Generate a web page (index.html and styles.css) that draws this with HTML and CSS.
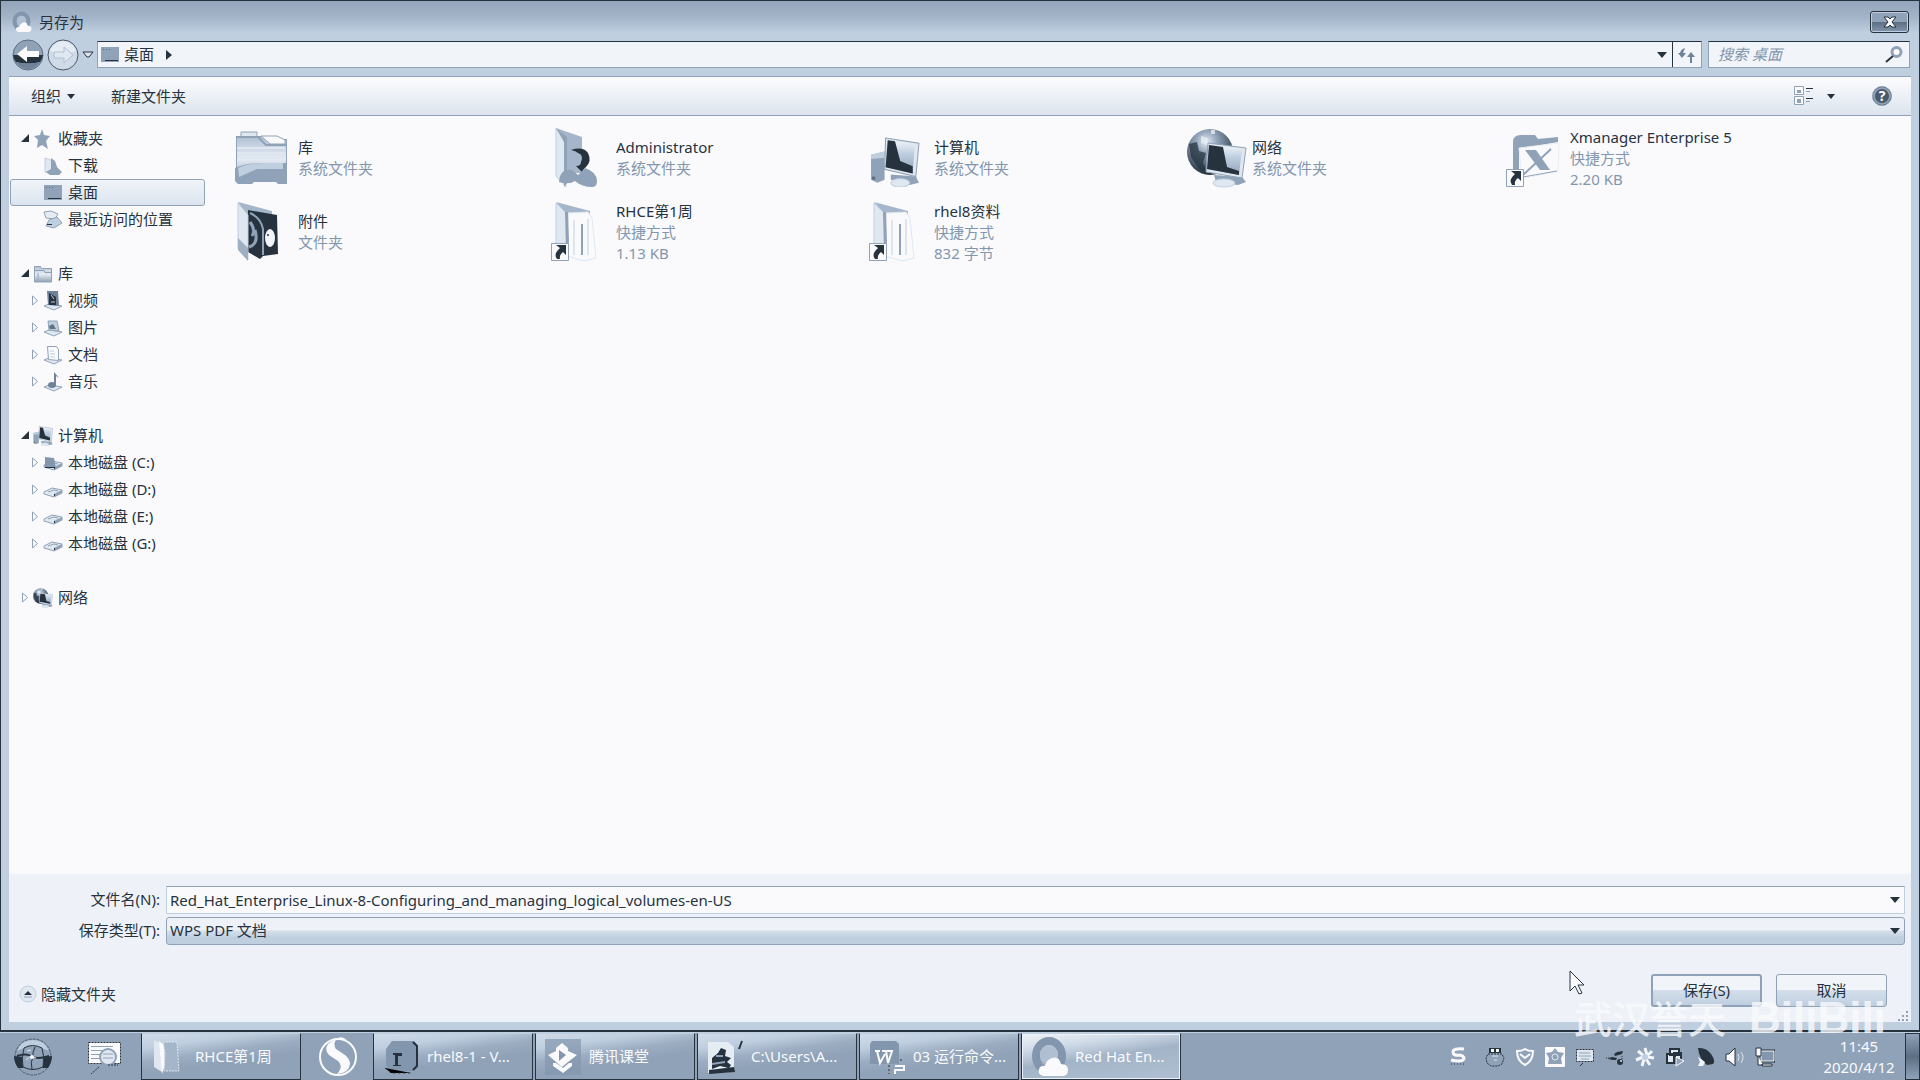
FILE: index.html
```html
<!DOCTYPE html>
<html lang="zh-CN">
<head>
<meta charset="utf-8">
<title>另存为</title>
<link rel="stylesheet" href="styles.css">
</head>
<body>
<svg class="defs" aria-hidden="true">
  <defs>
    <linearGradient id="g-fold" x1="0" y1="0" x2="1" y2="1"><stop offset="0" stop-color="#fafafd"/><stop offset="1" stop-color="#90a2b8"/></linearGradient>
    <linearGradient id="g-lib" x1="0" y1="0" x2="0" y2="1"><stop offset="0" stop-color="#b0c0d2"/><stop offset=".5" stop-color="#e6ecf4"/><stop offset="1" stop-color="#90a2b8"/></linearGradient>
    <radialGradient id="g-globe" cx=".42" cy=".28" r=".7"><stop offset="0" stop-color="#e6ecf4"/><stop offset=".35" stop-color="#90a2b8"/><stop offset="1" stop-color="#26333f"/></radialGradient>
    <linearGradient id="g-screen" x1="0" y1="0" x2="0" y2="1"><stop offset="0" stop-color="#f2f5fa"/><stop offset=".4" stop-color="#bfcfe0"/><stop offset="1" stop-color="#90a2b8"/></linearGradient>

    <symbol id="i-desk" viewBox="0 0 20 16"><path fill="#90a2b8" d="M1 0h18v15H1z"/><path stroke="#26333f" d="M5 13.500h13"/><path stroke="#5c6e82" stroke-dasharray="1 2" d="M3 2.500h9"/></symbol>
    <symbol id="i-star" viewBox="0 0 20 20"><path fill="#90a2b8" d="M9 0l2 6 6 1-4 5 2 8-6-4-5 3 1-8-4-4 6-1z"/></symbol>
    <symbol id="i-down" viewBox="0 0 20 20"><path fill="#dfe7f0" stroke="#bfcfe0" d="M2 2l8 3v13l-8-2z"/><path fill="#90a2b8" d="M8 2l4 3 2 6 5 5-3 3-9 0-4-3 5-3z"/></symbol>
    <symbol id="i-recent" viewBox="0 0 20 20"><path fill="#e6ecf4" stroke="#90a2b8" d="M1 2l7-1 7 3-3 5-9-1z"/><path fill="#bfcfe0" stroke="#90a2b8" d="M6 10l8-3 5 6-8 5-8-2z"/><path stroke="#26333f" d="M4 14.500h5"/></symbol>
    <symbol id="i-lib" viewBox="0 0 20 20"><path fill="url(#g-lib)" stroke="#90a2b8" d="M1.500 2.500h6l1 2h10V18h-17z"/><path stroke="#90a2b8" fill="none" d="M2 6.500h9l1 2h7M5 9v8"/></symbol>
    <symbol id="i-video" viewBox="0 0 20 20"><path fill="#dfe7f0" stroke="#90a2b8" d="M1 15l5-2 13 2-8 4z"/><path fill="#6f8299" d="M4 0h11l1 15-11-1z"/><path fill="#26333f" d="M6 2l7 4v8H6z"/><path stroke="#bfcfe0" d="M8 4l3 4M8 11h4"/></symbol>
    <symbol id="i-pic" viewBox="0 0 20 20"><path fill="#dfe7f0" stroke="#90a2b8" d="M1 14l5-2 13 2-8 4z"/><path fill="#bfcfe0" stroke="#90a2b8" d="M5 3h9l2 10-10-1z"/><path fill="#26333f" d="M6 8l4-2 3 5-6 0z" opacity=".6"/></symbol>
    <symbol id="i-doc" viewBox="0 0 20 20"><path fill="#dfe7f0" stroke="#90a2b8" d="M1 15l5-2 13 2-8 4z"/><path fill="#fafafd" stroke="#90a2b8" d="M4.500 1.500h9l2 3v11l-10-1z"/><path stroke="#bfcfe0" d="M7 6h4M7 9h5M7 12h5"/></symbol>
    <symbol id="i-music" viewBox="0 0 20 20"><path fill="#dfe7f0" stroke="#90a2b8" d="M1 15l5-2 13 2-8 4z"/><ellipse cx="9" cy="13" rx="4" ry="3" fill="#6f8299"/><path fill="#6f8299" d="M11 0l5 6-3-2v10h-2z"/></symbol>
    <symbol id="i-pc" viewBox="0 0 48 48"><path fill="#90a2b8" d="M1 17l13-3v27l-7 3-6-3z"/><path fill="#bfcfe0" d="M1 17l13-3v6L1 21z"/><path fill="#5c6e82" d="M2 38h3v3H2z"/><path fill="#90a2b8" d="M20 36l24 2 3 6-9 2-18-5z"/><ellipse cx="29" cy="44" rx="9" ry="4" fill="#dfe7f0" stroke="#bfcfe0"/><path fill="#dfe7f0" stroke="#90a2b8" d="M15 1l32 5-3 32-30-7z"/><path fill="url(#g-screen)" d="M17 3l26 4-2 28-26-6z"/><path fill="#26333f" d="M17 3l7 1 5 19 12 5v7l-26-6z"/></symbol>
    <symbol id="i-disk" viewBox="0 0 20 20"><path fill="#dfe7f0" stroke="#90a2b8" d="M1 12l8-4 10 2v3l-8 4-10-3z"/><path fill="#90a2b8" d="M11 14l8-4v3l-8 4z"/><path fill="none" stroke="#90a2b8" d="M5 12l6-2 4 1"/><path fill="#26333f" d="M11 14h1v2h-1z"/></symbol>
    <symbol id="i-diskc" viewBox="0 0 20 20"><use href="#i-disk"/><path fill="#8296ad" d="M2 4l9 1 2 10-11-1z"/><path stroke="#26333f" d="M2 14.500h10"/></symbol>
    <symbol id="i-net" viewBox="0 0 60 60"><circle cx="23" cy="24" r="23" fill="url(#g-globe)"/><path fill="#e6ecf4" opacity=".8" d="M14 8l7 2-1 7-6-2zM24 2h4v4h-4z"/><path fill="#26333f" d="M2 16l8-2 2 9 7 2-3 10 5 11-9-5-8-12z" opacity=".75"/><path fill="#90a2b8" d="M27 47l28 2 4 5-8 3-22-3z"/><ellipse cx="37" cy="55" rx="11" ry="4" fill="#dfe7f0" stroke="#bfcfe0"/><path fill="#dfe7f0" stroke="#90a2b8" d="M21 15l38 5-4 30-36-6z"/><path fill="url(#g-screen)" d="M22 17l33 4-3 26-32-6z"/><path fill="#26333f" d="M22 17l14 2 4 20 12 4v4l-32-6z"/></symbol>

    <symbol id="f-lib" viewBox="0 0 60 60"><path fill="#dfe7f0" stroke="#90a2b8" d="M8 4h16v6H8z"/><path fill="url(#g-lib)" stroke="#90a2b8" d="M3.500 8.500h27l4 3h19v42h-50z"/><path fill="#fafafd" stroke="#90a2b8" d="M28 8h16l8 4v4H37z"/><path fill="none" stroke="#90a2b8" stroke-width="2" d="M3 9h22l8 8h21"/><path stroke="#dfe7f0" stroke-width="2" d="M4 20h48M4 25h48M4 30h48"/><path fill="#90a2b8" d="M2 40q10-5 26-5h26v21h-9l-3-3H22l-3 3H5l-3-3z"/><path fill="#bfcfe0" d="M5 40q10-5 25-5h20v6H24l-18 8z"/></symbol>
    <symbol id="f-user" viewBox="0 0 60 60"><path fill="#a6b6ca" d="M5 0l26 9v36H14z"/><path fill="#dfe7f0" stroke="#bfcfe0" d="M5 0l10 13v46L5 48z"/><path fill="#90a2b8" d="M5 0l11 9v46l-3 4V14z"/><circle cx="27" cy="31" r="9" fill="#a6b6ca"/><path fill="#26333f" d="M20 22q12-4 17 3 4 8-2 14-4 3-3 6l-7-7q5 0 5-4 3-7-3-9-2-2-7-3z"/><path fill="#90a2b8" d="M8 54q1-14 13-12l6 5 7-7q12 4 12 13 0 6-5 6-10 0-17-6-6 4-16 1z"/></symbol>
    <symbol id="f-music" viewBox="0 0 60 60"><path fill="#a6b6ca" d="M5 0l34 9v8L8 11z"/><path fill="#26333f" d="M15 8l29 5 1 39-15 2-3 3-12-7z"/><path fill="none" stroke="#90a2b8" stroke-width="2" d="M17 11q11 5 13 16v26"/><ellipse cx="37" cy="36" rx="5" ry="9" fill="#f2f5fa"/><circle cx="35" cy="33" r="1" fill="#26333f"/><path fill="none" stroke="#90a2b8" stroke-width="3" d="M17 20q6 8 2 14M22 28q4 14-6 17"/><path fill="#dfe7f0" stroke="#bfcfe0" d="M5 1l10 12v45L5 47z"/><path fill="#90a2b8" d="M5 36l10 10v13L5 48z" opacity=".8"/></symbol>
    <symbol id="i-arrow" viewBox="0 0 18 18"><path fill="#fafafd" stroke="#90a2b8" d="M.5.5h17v17H.5z"/><path fill="#26333f" d="M5 2h10v10l-3-3q-4 3-3 7H6q-4-5 3-11z"/></symbol>
    <symbol id="f-short" viewBox="0 0 60 60"><path fill="#a6b6ca" d="M5 0l34 9v6L14 10z"/><path fill="#fafafd" stroke="#dfe7f0" d="M17 11l20-1 4 6 4 40-12 3-17-5z"/><path fill="none" stroke="#90a2b8" stroke-width="2" d="M31 22v31"/><path fill="none" stroke="#bfcfe0" d="M23 18v35M37 17v36"/><path fill="#dfe7f0" stroke="#bfcfe0" d="M5 1l11 11v46L5 48z"/><path fill="#90a2b8" d="M14 10h3l1 30-3 9z"/><use href="#i-arrow" x="0" y="41" width="18" height="18"/></symbol>
    <symbol id="f-xm" viewBox="0 0 60 60"><path fill="#90a2b8" d="M8 14q0-7 8-7h14l3 4 20-2v5l-39 7v24H8z"/><path fill="#fafafd" stroke="#e9eef5" d="M14 20l40-5-1 28-36 8z"/><path fill="#90a2b8" d="M20 22h11l14 20H35z"/><path stroke="#90a2b8" stroke-width="2" d="M46 21L18 47"/><path stroke="#90a2b8" d="M18 49l34-6"/><use href="#i-arrow" x="1" y="41" width="18" height="18"/></symbol>
    <symbol id="i-cloud" viewBox="0 0 38 40"><ellipse cx="18" cy="19" rx="13" ry="15" fill="none" stroke="#8296ad" stroke-width="8"/><circle cx="18" cy="17" r="9" fill="#b0c0d2"/><path fill="#fafafd" d="M12 39q-6-2-4-7 2-4 6-3 1-6 7-8 7-2 9 6 7 0 7 6 0 6-6 6z"/></symbol>
  </defs>
</svg>

<main class="dialog">
  <header class="titlebar">
    <svg class="app-icon"><use href="#i-cloud"/></svg>
    <h1 class="title">另存为</h1>
    <button class="close" aria-label="关闭"><svg width="14" height="12" viewBox="0 0 14 12"><path d="M1 1h4l2 2 2-2h4L9 6l4 5H9L7 9l-2 2H1l4-5z" fill="#fafafd" stroke="#26333f"/></svg></button>
  </header>

  <nav class="navbar">
    <div class="history">
      <button class="plain" aria-label="后退"><svg width="32" height="32" viewBox="0 0 32 32"><circle cx="16" cy="16" r="15" fill="#90a2b8" stroke="#5c6e82"/><path fill="#26333f" d="M1 16h30q-1 5-3 7-12 3-24 0-2-2-3-7z"/><path fill="#6f8299" d="M4 23q12 3 24 0-5 7-12 7T4 23z"/><path fill="#fafafd" d="M5 15l10-8v5h12v6H15v5z"/></svg></button>
      <button class="plain" aria-label="前进"><svg width="32" height="32" viewBox="0 0 32 32"><circle cx="16" cy="16" r="15" fill="#cfdbe8" stroke="#4a5a6b"/><path fill="#e6ecf4" d="M3 12q5-10 13-10t13 10q-12 5-26 0z"/><path fill="#dfe7f0" stroke="#b0c0d2" d="M7 13h10V8l9 8-9 8v-5H7z"/></svg></button>
      <button class="plain" aria-label="最近的页面"><svg width="12" height="8" viewBox="0 0 12 8"><path d="M1 1h10L7 6H5z" fill="#dfe7f0" stroke="#26333f"/></svg></button>
    </div>
    <div class="address">
      <svg width="20" height="16"><use href="#i-desk"/></svg>
      <a class="crumb" href="#">桌面</a>
      <svg width="6" height="10" viewBox="0 0 6 10"><path d="M0 0l6 5-6 5z" fill="#26333f"/></svg>
      <button class="plain address-drop" aria-label="以前的位置"><svg width="10" height="6"><path d="M0 0h10L5 6z" fill="#26333f"/></svg></button>
      <button class="refresh" aria-label="刷新"><svg width="18" height="18" viewBox="0 0 18 18"><path fill="#6f8299" d="M7 2L5 7h3l-4 5-4-5h2q1-4 5-5zM13 6l4 5h-3v6h-2v-6H9z"/></svg></button>
    </div>
    <label class="search">
      <input class="search-input" type="text" placeholder="搜索 桌面" aria-label="搜索 桌面">
      <svg width="18" height="18" viewBox="0 0 18 18"><circle cx="11.500" cy="6" r="4.500" fill="#fafafd" stroke="#90a2b8" stroke-width="3"/><path d="M8 10l-7 6" stroke="#26333f" stroke-width="2"/></svg>
    </label>
  </nav>

  <section class="client">
    <div class="toolbar">
      <button class="plain tool">组织 <svg width="8" height="5"><path d="M0 0h8L4 5z" fill="#26333f"/></svg></button>
      <button class="plain tool">新建文件夹</button>
      <div class="tool-right">
        <button class="plain view" aria-label="更改视图"><svg width="20" height="20" viewBox="0 0 20 20"><path fill="#fafafd" stroke="#90a2b8" d="M.5.5h9v8h-9zM.5 10.500h9v8h-9z"/><path fill="#90a2b8" d="M3 4h4v3H3zM3 13h4v4H3z"/><path stroke="#26333f" d="M12 2.500h7M12 12.500h7"/><path stroke="#90a2b8" d="M12 5.500h4M12 15.500h4"/></svg><svg width="8" height="5"><path d="M0 0h8L4 5z" fill="#26333f"/></svg></button>
        <button class="plain" aria-label="帮助"><svg width="20" height="20" viewBox="0 0 20 20"><circle cx="10" cy="10" r="9.500" fill="#26333f" stroke="#90a2b8"/><circle cx="10" cy="10" r="8" fill="#4a5a6b" stroke="#90a2b8" stroke-width="2"/><text x="10" y="15" class="help-mark">?</text></svg></button>
      </div>
    </div>

    <div class="panes">
      <ul class="tree">
        <li class="node root"><svg class="tw"><use href="#tw-open"/></svg><svg class="ic"><use href="#i-star"/></svg>收藏夹</li>
        <li class="node"><i class="tw"></i><svg class="ic"><use href="#i-down"/></svg>下载</li>
        <li class="node selected"><i class="tw"></i><svg class="ic"><use href="#i-desk"/></svg>桌面</li>
        <li class="node"><i class="tw"></i><svg class="ic"><use href="#i-recent"/></svg>最近访问的位置</li>
        <li class="node root spaced"><svg class="tw"><use href="#tw-open"/></svg><svg class="ic"><use href="#i-lib"/></svg>库</li>
        <li class="node"><svg class="tw"><use href="#tw-shut"/></svg><svg class="ic"><use href="#i-video"/></svg>视频</li>
        <li class="node"><svg class="tw"><use href="#tw-shut"/></svg><svg class="ic"><use href="#i-pic"/></svg>图片</li>
        <li class="node"><svg class="tw"><use href="#tw-shut"/></svg><svg class="ic"><use href="#i-doc"/></svg>文档</li>
        <li class="node"><svg class="tw"><use href="#tw-shut"/></svg><svg class="ic"><use href="#i-music"/></svg>音乐</li>
        <li class="node root spaced"><svg class="tw"><use href="#tw-open"/></svg><svg class="ic"><use href="#i-pc"/></svg>计算机</li>
        <li class="node"><svg class="tw"><use href="#tw-shut"/></svg><svg class="ic"><use href="#i-diskc"/></svg>本地磁盘 (C:)</li>
        <li class="node"><svg class="tw"><use href="#tw-shut"/></svg><svg class="ic"><use href="#i-disk"/></svg>本地磁盘 (D:)</li>
        <li class="node"><svg class="tw"><use href="#tw-shut"/></svg><svg class="ic"><use href="#i-disk"/></svg>本地磁盘 (E:)</li>
        <li class="node"><svg class="tw"><use href="#tw-shut"/></svg><svg class="ic"><use href="#i-disk"/></svg>本地磁盘 (G:)</li>
        <li class="node root spaced"><svg class="tw"><use href="#tw-shut"/></svg><svg class="ic"><use href="#i-net"/></svg>网络</li>
      </ul>
      <ul class="files">
        <li class="file"><svg class="big"><use href="#f-lib"/></svg><div><b>库</b><span>系统文件夹</span></div></li>
        <li class="file"><svg class="big"><use href="#f-user"/></svg><div><b>Administrator</b><span>系统文件夹</span></div></li>
        <li class="file"><svg class="big"><use href="#i-pc" x="0" y="9" width="52" height="50"/></svg><div><b>计算机</b><span>系统文件夹</span></div></li>
        <li class="file"><svg class="big"><use href="#i-net"/></svg><div><b>网络</b><span>系统文件夹</span></div></li>
        <li class="file"><svg class="big"><use href="#f-xm"/></svg><div><b>Xmanager Enterprise 5</b><span>快捷方式</span><span>2.20 KB</span></div></li>
        <li class="file"><svg class="big"><use href="#f-music"/></svg><div><b>附件</b><span>文件夹</span></div></li>
        <li class="file"><svg class="big"><use href="#f-short"/></svg><div><b>RHCE第1周</b><span>快捷方式</span><span>1.13 KB</span></div></li>
        <li class="file"><svg class="big"><use href="#f-short"/></svg><div><b>rhel8资料</b><span>快捷方式</span><span>832 字节</span></div></li>
      </ul>
    </div>

    <form class="bottom">
      <div class="field">
        <label for="fname">文件名(N):</label>
        <div class="combo">
          <input id="fname" class="box" type="text" value="Red_Hat_Enterprise_Linux-8-Configuring_and_managing_logical_volumes-en-US">
          <svg class="caret" width="10" height="6"><path d="M0 0h10L5 6z" fill="#26333f"/></svg>
        </div>
      </div>
      <div class="field">
        <label for="ftype">保存类型(T):</label>
        <div class="combo">
          <select id="ftype" class="box pick"><option>WPS PDF 文档</option></select>
          <svg class="caret" width="10" height="6"><path d="M0 0h10L5 6z" fill="#26333f"/></svg>
        </div>
      </div>
      <div class="actions">
        <button type="button" class="plain hide"><svg width="18" height="18" viewBox="0 0 18 18"><circle cx="9" cy="9" r="8" fill="#dfe7f0" stroke="#bfcfe0"/><path d="M5 10l4-4 4 4z" fill="#26333f"/><path d="M5 12h8" stroke="#90a2b8"/></svg>隐藏文件夹</button>
        <button type="button" class="btn primary">保存(S)</button>
        <button type="button" class="btn">取消</button>
        <svg class="grip" width="12" height="12"><path fill="#90a2b8" d="M9 1h2v2H9zM5 5h2v2H5zM9 5h2v2H9zM1 9h2v2H1zM5 9h2v2H5zM9 9h2v2H9z"/></svg>
      </div>
    </form>
  </section>
</main>

<svg class="defs" aria-hidden="true"><defs>
  <symbol id="tw-open" viewBox="0 0 8 9"><path fill="#26333f" d="M8 0v8H0z"/></symbol>
  <symbol id="tw-shut" viewBox="0 0 8 11"><path fill="#fafafd" stroke="#90a2b8" d="M1.500 1v9l5-4.500z"/></symbol>
</defs></svg>

<footer class="taskbar">
  <button class="plain launch start" aria-label="开始"><svg width="40" height="40" viewBox="0 0 40 40"><circle cx="20" cy="20" r="18" fill="#90a2b8" stroke="#4a5a6b" stroke-dasharray="3 1"/><path fill="#bfcfe0" d="M4 14Q8 3 20 3t16 11q-16-8-32 0z"/><path fill="#26333f" d="M1 19l9 1v11H5q-4-6-4-12zM39 19l-9 1v11h5q4-6 4-12z"/><path fill="#90a2b8" stroke="#26333f" d="M11 11q8-5 18 0 3 9 1 19-10 5-20 0-2-9 1-19z"/><path fill="none" stroke="#26333f" stroke-width="2" d="M4 19q9-3 14 0 6 4 18 0"/><path fill="none" stroke="#26333f" d="M22 10q-3 6-2 10-3 5-1 12"/><path fill="none" stroke="#dfe7f0" d="M13 23l5-4 5 2M14 14l4-1"/><circle cx="19" cy="20" r="2" fill="#fafafd"/></svg></button>
  <button class="plain launch note" aria-label="便笺"><svg width="36" height="36" viewBox="0 0 36 36"><path fill="#fafafd" stroke="#26333f" stroke-dasharray="2 1" d="M2.500 3.500h32v21h-32z"/><path stroke="#90a2b8" d="M5 7.500h22M5 11.500h14M5 15.500h10M5 19.500h9"/><circle cx="22" cy="18" r="8" fill="#dfe7f0" stroke="#90a2b8" stroke-width="2"/><path stroke="#90a2b8" d="M17 15h10M17 19h10"/><path stroke="#26333f" stroke-dasharray="2 1" d="M13 28l-8 7M22 26h10"/></svg></button>
  <button class="task"><svg class="ti" viewBox="0 0 36 36"><path fill="#dfe7f0" d="M3 1l8 4v28l-8-5z"/><path fill="#fafafd" d="M8 2l5 4 1 20-3 9z"/><path fill="#a6b6ca" stroke="#dfe7f0" stroke-dasharray="2 1" d="M12 3l14 0 2 29-15 0 1-18z"/></svg><span>RHCE第1周</span></button>
  <button class="plain launch sogou" aria-label="搜狗"><svg width="40" height="40" viewBox="0 0 40 40"><circle cx="20" cy="20" r="18" fill="#90a2b8" stroke="#fafafd" stroke-width="2"/><path fill="#fafafd" d="M29 3Q18 0 10 7q-4 6 1 11l9 6q6 5-1 13 12-1 13-10 0-5-5-9l-9-6q-4-6 2-11 4-2 9 2z"/></svg></button>
  <button class="task"><svg class="ti" viewBox="0 0 36 36"><path fill="#8296ad" d="M9 2h22l4 5v20l-5 5H7L3 26V10z"/><path fill="none" stroke="#26333f" stroke-width="2" d="M30 3l4 4v20l-4 4"/><path stroke="#26333f" stroke-dasharray="2 3" d="M2 29l6 5 20 0"/><path fill="#26333f" d="M10 14h9v3h-4v9h3v1h-8v-1h2V16h-2z"/></svg><span>rhel8-1 - V...</span></button>
  <button class="task"><svg class="ti" viewBox="0 0 36 36"><path fill="#8296ad" opacity=".7" d="M0 0h36v36H0z"/><path fill="#fafafd" d="M17 4l6 5v3l9 4-9 7-6 5-6-5-8-7 8-4V9zM8 24h3l7 5 6-5h3v3l-9 7-10-7z"/><path fill="#8296ad" d="M14 11l7 5-7 6z"/></svg><span>腾讯课堂</span></button>
  <button class="task"><svg class="ti" viewBox="0 0 36 36"><path fill="#e6ecf4" d="M1 3h20l6 5v25l-26 1z"/><path fill="#26333f" d="M5 19l6-5 3-5 5 2-1 6 6 2-4 4 4 3-2 3-9-2-8 3zM2 31l25-3 1 5-26 2z"/><path stroke="#90a2b8" stroke-width="2" d="M9 17h7M5 25l13-2"/><path stroke="#26333f" stroke-width="2" d="M32 10l3-8"/></svg><span>C:\Users\A...</span></button>
  <button class="task"><svg class="ti" viewBox="0 0 36 36"><path fill="#8296ad" d="M3 2h24l3 3v20H1V5z"/><path fill="none" stroke="#fafafd" stroke-width="2" d="M6 12h5M8 12l3 12 5-9M13 12h4l2 12 4-12h-5M26 27h9v4h-9v4"/><path stroke="#26333f" stroke-dasharray="2 2" d="M20 26v9M32 20v3"/></svg><span>03 运行命令...</span></button>
  <button class="task active"><svg class="ti cloud"><use href="#i-cloud"/></svg><span>Red Hat En...</span></button>

  <div class="tray">
    <svg class="tr" viewBox="0 0 20 20"><path fill="none" stroke="#fafafd" stroke-width="3" d="M16 2Q5 1 5 5t7 3q6 2 3 5-3 2-12 0"/><path stroke="#26333f" stroke-dasharray="1 2" d="M3 17h14"/></svg>
    <svg class="tr gap" viewBox="0 0 20 20"><path fill="#26333f" d="M4 1h12v5H4z"/><path fill="#fafafd" d="M6 2h3v3H6zM11 2h3v3h-3z"/><path fill="#90a2b8" stroke="#26333f" stroke-dasharray="2 1" d="M3 7h14l2 4-2 6-4 2H6l-4-3-1-5z"/><path stroke="#dfe7f0" d="M7 9h6M9 13h3"/></svg>
    <svg class="tr" viewBox="0 0 20 20"><path fill="none" stroke="#fafafd" stroke-width="2" d="M2 4q5 0 8-2 3 2 8 2 0 10-8 14Q2 14 2 4zM5 7l5 4 5-4"/></svg>
    <svg class="tr" viewBox="0 0 20 20"><rect width="20" height="20" rx="1" fill="#fafafd"/><path fill="#90a2b8" d="M10 1l3 4 6 1-3 5 1 6H3l1-6-3-5 6-1z"/><circle cx="10" cy="10" r="3" fill="none" stroke="#dfe7f0"/></svg>
    <svg class="tr" viewBox="0 0 20 20"><path fill="#dfe7f0" stroke="#26333f" stroke-dasharray="2 1" d="M1.500 2.500h17v12h-17z"/><path stroke="#90a2b8" d="M4 6h11M4 9h12M6 12h8"/><path stroke="#26333f" d="M8 16l-3 3"/></svg>
    <svg class="tr" viewBox="0 0 20 20"><path fill="#26333f" d="M9 7l3-2 6-1-1 3-7 2zM3 12l4-2 5 1-1 2H8z"/><circle cx="15" cy="15" r="3" fill="#26333f"/><path stroke="#26333f" stroke-dasharray="1 1" d="M1 11h7M17 9v5"/><circle cx="16" cy="14" r="1" fill="#dfe7f0"/></svg>
    <svg class="tr" viewBox="0 0 20 20"><g stroke="#f2f5fa" stroke-width="3"><path d="M10 1l2 7M17 4l-5 5M19 11l-7-1M15 18l-4-6M7 19l2-7M1 13l7-3M3 4l6 5"/></g><circle cx="10" cy="10" r="3" fill="#bfcfe0"/></svg>
    <svg class="tr" viewBox="0 0 20 20"><path fill="#dfe7f0" stroke="#26333f" stroke-width="2" d="M5 2h9v6H5zM2 7h8v9H2zM9 6h7v8H9z"/><path fill="#90a2b8" stroke="#fafafd" d="M11 10l8 4-8 5z"/></svg>
    <svg class="tr" viewBox="0 0 20 20"><path fill="#26333f" d="M3 1q8-1 13 6 5 7 2 10l-6 1Q4 12 3 1z"/><path fill="#f2f5fa" d="M3 10l7 5-2 4H3l2-4z"/></svg>
    <svg class="tr" viewBox="0 0 20 20"><path fill="#fafafd" stroke="#26333f" d="M1 7h3l6-6v18l-6-5H1z"/><path fill="none" stroke="#dfe7f0" d="M13 7q2 3 0 7M16 5q4 5 0 11"/></svg>
    <svg class="tr" viewBox="0 0 20 20"><path fill="#8296ad" stroke="#26333f" stroke-width="3" d="M6 4h13v10H6z"/><path fill="#8296ad" stroke="#fafafd" d="M6 4h13v10H6z"/><path fill="#fafafd" stroke="#26333f" d="M1 1h5v8H1zM3 9v9h5M7 17h10v2H7z"/></svg>
  </div>
  <time class="clock"><span>11:45</span><span>2020/4/12</span></time>
  <button class="plain peek" aria-label="显示桌面"></button>
</footer>

<svg class="cursor" width="17" height="26" viewBox="0 0 17 26"><path d="M1 1v20l5-5 4 8 3-1-4-8h6z" fill="#fafafd" stroke="#26333f"/></svg>
<div class="watermark"><span>武汉誉天</span><span class="logo">BiliBili</span></div>
</body>
</html>
```

FILE: styles.css
```css
:root {
  --white: #fafafd;
  --pale: #eef2f8;
  --light: #bfcfe0;
  --mid: #90a2b8;
  --ink: #26333f;
}

* { box-sizing: border-box; }

body {
  margin: 0;
  min-height: 100vh;
  display: flex;
  flex-direction: column;
  background: var(--light);
  color: var(--ink);
  font: 15px/21px "Noto Sans", "Noto Sans CJK SC", sans-serif;
  overflow: hidden;
}

ul { list-style: none; margin: 0; padding: 0; }
svg { display: block; flex: none; }
button, input, select { font: inherit; color: inherit; margin: 0; }
.defs { position: absolute; width: 0; height: 0; }
.plain { border: 0; padding: 0; background: none; display: flex; align-items: center; }

/* window frame */
.dialog {
  flex: 1;
  display: flex;
  flex-direction: column;
  padding: 0 8px 8px;
  border: 1px solid var(--ink);
  border-bottom-width: 2px;
  background: linear-gradient(#93a5ba, #a3b4c8 16px, var(--light) 32px);
}

.titlebar { height: 36px; display: flex; align-items: center; padding: 6px 0 0 3px; }
.app-icon { width: 20px; height: 22px; }
.title { flex: 1; margin: 0 0 0 7px; font-size: 15px; line-height: 21px; font-weight: 400; }
.close {
  width: 39px;
  height: 22px;
  margin-right: 2px;
  padding: 0;
  display: grid;
  place-items: center;
  border: 1px solid var(--ink);
  border-radius: 3px;
  background: linear-gradient(var(--mid) 50%, #5c6e82 50%, #8296ad);
  box-shadow: inset 0 0 0 1px var(--light);
}

.navbar { height: 39px; display: flex; align-items: center; padding: 0 1px 4px 3px; }
.history { display: flex; align-items: center; gap: 3px; width: 85px; }
.address {
  flex: 1;
  display: flex;
  align-items: center;
  height: 27px;
  padding-left: 2px;
  margin-right: 6px;
  border: 1px solid var(--mid);
  border-top-color: var(--ink);
  background: #f1f4f9;
}
.crumb { color: inherit; text-decoration: none; margin: 0 12px 0 4px; }
.address-drop { margin-left: auto; padding: 8px 5px; }
.refresh {
  height: 25px;
  width: 29px;
  padding: 0 5px;
  border: 0;
  border-left: 1px solid var(--ink);
  background: none;
}
.search {
  width: 202px;
  height: 27px;
  display: flex;
  align-items: center;
  padding: 0 6px 0 9px;
  border: 1px solid var(--mid);
  border-top-color: var(--ink);
  background: #f1f4f9;
}
.search-input { flex: 1; min-width: 0; padding: 0; border: 0; background: none; outline: 0; font-style: italic; }
.search-input::placeholder { color: #8296ad; opacity: 1; }

.client {
  flex: 1;
  display: flex;
  flex-direction: column;
  border-top: 1px solid var(--mid);
  background: var(--white);
}

.toolbar {
  height: 39px;
  display: flex;
  align-items: center;
  gap: 36px;
  padding: 0 19px 0 22px;
  border-bottom: 1px solid var(--mid);
  background: linear-gradient(var(--white) 10%, #dbe4ee);
}
.tool { gap: 6px; }
.tool-right { margin-left: auto; display: flex; gap: 37px; }
.view { gap: 13px; }
.help-mark { font-size: 14px; font-weight: 700; fill: var(--white); text-anchor: middle; }

.panes { flex: 1; display: flex; }

/* folder tree */
.tree { width: 198px; padding: 9px 2px 0 1px; }
.node {
  display: flex;
  align-items: center;
  height: 27px;
  padding-left: 20px;
  border: 1px solid transparent;
  border-radius: 3px;
  white-space: nowrap;
}
.root { padding-left: 10px; }
.spaced { margin-top: 27px; }
.selected { border-color: var(--mid); background: linear-gradient(#f1f4f9, #dbe4ee); }
.tw { width: 8px; height: 11px; margin-right: 4px; }
.ic { width: 20px; height: 20px; margin-right: 5px; }

/* file tiles */
.files {
  flex: 1;
  display: grid;
  grid-template-columns: repeat(auto-fill, 318px);
  grid-auto-rows: 74px;
  align-content: start;
  padding: 5px 0 0 26px;
}
.file { display: flex; align-items: center; gap: 5px; }
.big { width: 60px; height: 60px; }
.file b, .file span { display: block; font-weight: 400; }
.file span { color: #8296ad; }

/* file name and type */
.bottom { height: 148px; padding: 10px 6px 0 0; background: var(--pale); }
.field { display: flex; align-items: center; height: 31px; }
.field label { width: 157px; padding-right: 6px; text-align: right; }
.combo { flex: 1; display: grid; align-items: center; }
.combo > * { grid-area: 1 / 1; }
.box {
  width: 100%;
  height: 28px;
  padding: 0 24px 0 3px;
  border: 1px solid var(--light);
  border-top-color: var(--mid);
  background: var(--white);
  outline: 0;
}
.pick {
  appearance: none;
  border-color: var(--mid);
  border-radius: 3px;
  background: linear-gradient(#eef2f8 45%, #d5dfeb 50%, var(--light) 75%);
}
.caret { justify-self: end; margin-right: 5px; pointer-events: none; }

.actions { display: flex; align-items: center; height: 76px; padding-left: 10px; gap: 14px; }
.hide { gap: 4px; margin: 20px auto 0 0; }
.btn {
  width: 111px;
  height: 33px;
  margin-top: 12px;
  border: 1px solid var(--mid);
  border-radius: 3px;
  background: linear-gradient(#f1f4f9 48%, #d5dfeb 48%, var(--light));
}
.primary { border-width: 2px; }
.grip { align-self: flex-end; margin: 0 -4px 0 -4px; }

/* taskbar */
.taskbar {
  height: 48px;
  display: flex;
  align-items: center;
  background: var(--mid);
  border-top: 1px solid var(--light);
  color: var(--white);
}
.launch { justify-content: center; }
.start { width: 66px; }
.note { width: 75px; }
.sogou { width: 70px; }
.task {
  width: 160px;
  height: 47px;
  margin-right: 2px;
  display: flex;
  align-items: center;
  padding: 0 0 0 9px;
  border: 1px solid var(--ink);
  border-top-color: var(--light);
  background: linear-gradient(172deg, #d0dbe8, var(--light) 22%, #9cadc2 42%, var(--mid) 60%);
  white-space: nowrap;
}
.task.active { background: linear-gradient(172deg, #f1f4f9, #d0dbe8 25%, #a3b4c8 50%, #b0c0d2); box-shadow: inset 0 0 0 1px var(--pale); }
.ti { width: 36px; height: 36px; margin-right: 8px; }
.cloud { width: 38px; height: 40px; margin-right: 6px; }

.tray { margin-left: auto; display: flex; gap: 10px; }
.tr { width: 20px; height: 20px; }
.gap { margin-left: 7px; }
.clock { width: 92px; margin-left: 38px; text-align: center; }
.clock span { display: block; }
.peek { width: 15px; height: 47px; border: 1px solid var(--ink); background: linear-gradient(var(--mid), #5c6e82, var(--mid)); }

/* overlays */
.cursor { position: absolute; right: 334px; bottom: 84px; }
.watermark {
  position: absolute;
  right: 34px;
  bottom: 42px;
  display: flex;
  align-items: center;
  gap: 23px;
  font-size: 38px;
  line-height: 40px;
  font-weight: 500;
  color: rgba(250, 250, 253, .8);
  pointer-events: none;
}
.logo { font: 700 44px/40px "Liberation Sans", sans-serif; }
```
